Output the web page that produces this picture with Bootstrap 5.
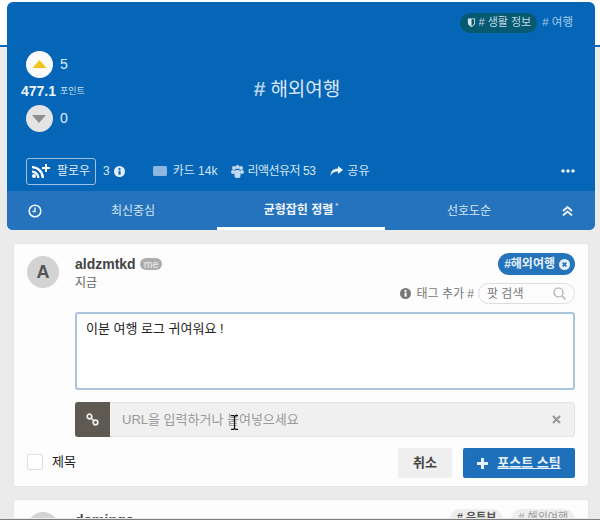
<!DOCTYPE html>
<html lang="ko">
<head>
    <meta charset="UTF-8">
    <title>해외여행</title>
    <link href="https://cdn.jsdelivr.net/npm/bootstrap@5.3.0/dist/css/bootstrap.min.css" rel="stylesheet">
    <style>
        html, body { height: 520px; overflow: hidden; }
        body {
            font-family: "Liberation Sans", "Noto Sans CJK KR", sans-serif;
            font-size: 12px;
            color: #333;
            background: linear-gradient(#fff 0 45px, #0b68b8 45px 47px, #ebebeb 47px);
        }
        .hero {
            margin: 2px 5px 0 7px;
            height: 228px;
            background: #0565b7;
            color: #d5e5f3;
            border-radius: 6px;
            overflow: hidden;
        }
        .hero-top { height: 189px; padding: 10px 20px 0 14px; }
        .cat-row { height: 21px; font-size: 11.5px; }
        .cat-main { background: #055a72; border-radius: 11px; padding: 0 6px 0 7px; height: 20px; margin-right: 5px; color: #c5d9e4; font-size: 11px; gap: 3px; }
        .cat-sub { color: #a5cdec; margin-right: 2px; }
        .vote-col { width: 68px; margin-top: 18px; }
        .vote-line { padding-left: 5px; height: 27px; font-size: 14px; color: #e1edf7; }
        .vote-btn { width: 27px; height: 27px; border-radius: 50%; background: #fafafa; margin-right: 7px; }
        .vote-btn.is-down { background: #e4e4e4; }
        .point-line { height: 27px; font-size: 14px; font-weight: 700; color: #eef4fa; white-space: nowrap; }
        .point-line small { font-size: 9px; font-weight: 400; margin-left: 4px; color: #cfe0f0; }
        .hero-title { font-size: 19px; padding: 40px 70px 0 0; color: #dbe8f4; }
        .hash { color: #b9d3ea; font-weight: 700; font-size: 21px; margin-right: 5px; }
        .stat-row { height: 26px; margin: 26px 0 0 5px; font-size: 12px; }
        .follow-btn { width: 70px; height: 27px; border: 1px solid #9cc3e6; border-radius: 3px; color: #e3eef8; margin-right: 7px; gap: 5px; }
        .card-ico { margin: 0 6px 0 28px; }
        .card-txt { margin-right: 14px; }
        .react-ico { margin-right: 3px; }
        .react-txt { margin-right: 15px; letter-spacing: -.5px; }
        .hero-tabs { height: 39px; background: #2673bd; font-size: 12px; color: #d5e5f3; }
        .hero-tabs > div { height: 39px; }
        .tab-clock { width: 42px; padding-left: 21px; }
        .tab-item { width: 168px; }
        .tab-item.is-on { border-bottom: 3px solid #fff; color: #f1f6fb; font-weight: 700; padding-top: 2px; }
        .tab-star { font-size: 8px; font-weight: 400; margin: -8px 0 0 2px; }
        .tab-end { flex: 1; padding-left: 9px; }
        .post-box {
            margin: 13px 11px 0 13px;
            height: 244px;
            background: #fdfdfe;
            border: 1px solid #e6e6e6;
            border-radius: 3px;
            padding: 9px 13px 0 13px;
            position: relative;
        }
        .ava { width: 32px; height: 32px; border-radius: 50%; background: #d3d3d3; color: #555; font-size: 18px; font-weight: 700; margin: 3px 16px 0 0; }
        .uname { font-size: 14px; font-weight: 700; color: #444; line-height: 18px; margin-top: 2px; }
        .me-tag { background: #adadad; color: #eee; font-size: 10.5px; border-radius: 7px; padding: 0 4px; line-height: 12px; margin-left: 4px; font-weight: 400; }
        .when { color: #666; font-size: 12px; margin-top: 1px; }
        .tag-pill { background: #2573bb; color: #e6f0f8; height: 22px; font-size: 12px; font-weight: 700; border-radius: 11px; padding: 0 5px 0 6px; gap: 4px; margin-bottom: 8px; }
        .tag-add { color: #777; font-size: 12px; gap: 4px; }
        .tag-add-ico { margin-right: 1px; }
        .tag-search { width: 97px; height: 21px; border: 1px solid #ddd; border-radius: 11px; padding: 0 8px; color: #777; }
        .memo {
            height: 78px;
            margin: 8px 0 0 48px;
            border: 2px solid #a9c5de;
            border-radius: 3px;
            background: #fff;
            padding: 5px 9px;
            font-size: 13px;
            color: #222;
        }
        .url-row { height: 35px; margin: 12px 0 0 48px; background: #f0f0f0; border: 1px solid #e3e3e3; border-radius: 3px; }
        .url-icon { width: 35px; height: 35px; margin: -1px 0 -1px -1px; background: #5e5a51; border-radius: 3px 0 0 3px; }
        .url-text { flex: 1; padding-left: 12px; color: #999; font-size: 13px; }
        .url-x { margin-right: 13px; }
        .cursor-i { position: absolute; left: 217px; top: 171px; }
        .foot-row { margin-top: 11px; height: 30px; }
        .chk { width: 16px; height: 16px; border: 1px solid #ddd; border-radius: 2px; background: #fff; margin: 0 9px 2px 0; }
        .title-lab { font-size: 13px; color: #222; margin-bottom: 2px; }
        .cancel-btn { width: 54px; height: 30px; background: #efefef; color: #444; font-size: 13px; font-weight: 700; border-radius: 2px; margin-right: 11px; }
        .stim-btn { width: 112px; height: 30px; background: #1f70bb; color: #e6f0f8; font-size: 13px; font-weight: 700; border-radius: 2px; gap: 9px; }
        .next-box {
            margin: 12px 11px 0 13px;
            height: 19px;
            background: #fdfdfe;
            border: 1px solid #e6e6e6;
            border-bottom: 0;
            border-radius: 3px 3px 0 0;
            padding: 9px 13px 0 13px;
            overflow: hidden;
        }
        .next-tag { background: #eee; color: #555; border-radius: 10px; padding: 0 7px; height: 20px; font-size: 11px; margin-left: 8px; white-space: nowrap; font-weight: 700; }
        .next-tag.is-dim { color: #999; font-weight: 400; }
        .page-edge { position: absolute; left: 0; right: 0; top: 519px; height: 1px; background: #7d7d7d; }
    </style>
</head>
<body>
    <div class="hero">
        <div class="hero-top">
            <div class="cat-row d-flex justify-content-end align-items-center">
                <span class="cat-main d-flex align-items-center">
                    <svg width="9" height="11" viewBox="0 0 10 11"><path d="M1 1h8v5c0 2-2 3.500-4 4.500C3 9.500 1 8 1 6z" fill="#dbe6ec"/><path d="M5 2v7.500c1.500-.8 3-2 3-3.500V2z" fill="#055a72"/></svg>
                    # 생활 정보
                </span>
                <span class="cat-sub"># 여행</span>
            </div>
            <div class="d-flex">
                <div class="vote-col">
                    <div class="vote-line d-flex align-items-center">
                        <span class="vote-btn d-flex align-items-center justify-content-center">
                            <svg width="15" height="9" viewBox="0 0 15 9"><path d="M7.500 0l7 8H.5z" fill="#f0c419"/></svg>
                        </span>5
                    </div>
                    <div class="point-line d-flex align-items-center">477.1<small>포인트</small></div>
                    <div class="vote-line d-flex align-items-center">
                        <span class="vote-btn is-down d-flex align-items-center justify-content-center">
                            <svg width="15" height="8" viewBox="0 0 15 8"><path d="M0 0h14L7 8z" fill="#8e8e8e"/></svg>
                        </span>0
                    </div>
                </div>
                <div class="hero-title flex-grow-1 text-center"><span class="hash">#</span>해외여행</div>
            </div>
            <div class="stat-row d-flex align-items-center">
                <span class="follow-btn d-flex align-items-center justify-content-center">
                    <svg width="20" height="14" viewBox="0 0 20 14" fill="#fff"><circle cx="2" cy="12" r="2"/><path d="M0 6.500a7.500 7.500 0 0 1 7.500 7.500H5.200A5.200 5.200 0 0 0 0 8.800z"/><path d="M0 2a12 12 0 0 1 12 12H9.700A9.700 9.700 0 0 0 0 4.300z"/><path d="M13 0h2v3h3v2h-3v3h-2V5h-3V3h3z"/></svg>
                    팔로우
                </span>
                <span class="me-1">3</span>
                <svg width="11" height="11" viewBox="0 0 12 12"><circle cx="6" cy="6" r="6" fill="#e3eef8"/><rect x="5" y="5" width="2.200" height="4.500" fill="#0565b7"/><circle cx="6" cy="3.200" r="1.200" fill="#0565b7"/></svg>
                <svg class="card-ico" width="14" height="10" viewBox="0 0 14 10"><rect width="14" height="10" rx="1.500" fill="#8fb6e0"/></svg>
                <span class="card-txt">카드 14k</span>
                <svg class="react-ico" width="13" height="13" viewBox="0 0 13 13" fill="#c5d9ee"><circle cx="3" cy="3" r="2"/><circle cx="6.500" cy="2" r="2"/><circle cx="10" cy="3" r="2"/><circle cx="2" cy="7" r="2"/><circle cx="11" cy="7" r="2"/><rect x="3.500" y="5" width="6" height="8" rx="2"/></svg>
                <span class="react-txt">리액션유저 53</span>
                <svg class="me-1" width="13" height="10" viewBox="0 0 13 10"><path d="M8 0l5 4-5 4V5.500C4.500 5.500 2 6.500.5 10 .5 5.500 3 2.500 8 2.500z" fill="#f0f5fa"/></svg>
                <span>공유</span>
                <svg class="ms-auto" width="14" height="4" viewBox="0 0 14 4" fill="#e3eef8"><circle cx="2" cy="2" r="1.800"/><circle cx="7" cy="2" r="1.800"/><circle cx="12" cy="2" r="1.800"/></svg>
            </div>
        </div>
        <div class="hero-tabs d-flex">
            <div class="tab-clock d-flex align-items-center">
                <svg width="14" height="14" viewBox="0 0 14 14" fill="none" stroke="#f0f5fa"><circle cx="7" cy="7" r="5.800" stroke-width="1.600"/><path d="M7 3.500V7.500H4.500" stroke-width="1.400"/></svg>
            </div>
            <div class="tab-item d-flex align-items-center justify-content-center">최신중심</div>
            <div class="tab-item is-on d-flex align-items-center justify-content-center">균형잡힌 정렬<span class="tab-star">*</span></div>
            <div class="tab-item d-flex align-items-center justify-content-center">선호도순</div>
            <div class="tab-end d-flex align-items-center">
                <svg width="11" height="10" viewBox="0 0 11 10" fill="none" stroke="#f0f5fa" stroke-width="1.800"><path d="M1 5l4.500-4L10 5"/><path d="M1 9.500l4.500-4 4.500 4"/></svg>
            </div>
        </div>
    </div>

    <div class="post-box">
        <div class="d-flex">
            <div class="ava d-flex align-items-center justify-content-center">A</div>
            <div>
                <div class="uname d-flex align-items-center">aldzmtkd<span class="me-tag">me</span></div>
                <div class="when">지금</div>
            </div>
            <div class="ms-auto d-flex flex-column align-items-end">
                <span class="tag-pill d-flex align-items-center">
                    #해외여행
                    <svg width="11" height="11" viewBox="0 0 12 12"><circle cx="6" cy="6" r="6" fill="#e6f0f8"/><path d="M4 4l4 4M8 4l-4 4" stroke="#2573bb" stroke-width="1.800"/></svg>
                </span>
                <div class="tag-add d-flex align-items-center">
                    <svg class="tag-add-ico" width="11" height="11" viewBox="0 0 12 12"><circle cx="6" cy="6" r="6" fill="#777"/><rect x="5" y="5" width="2.200" height="4.500" fill="#fff"/><circle cx="6" cy="3.200" r="1.200" fill="#fff"/></svg>
                    태그 추가 #
                    <span class="tag-search d-flex align-items-center justify-content-between">
                        팟 검색
                        <svg width="13" height="13" viewBox="0 0 13 13" fill="none" stroke="#aaa" stroke-width="1.200"><circle cx="5.500" cy="5.500" r="4.500"/><path d="M9 9l3.500 3.500"/></svg>
                    </span>
                </div>
            </div>
        </div>
        <div class="memo">이분 여행 로그 귀여워요 !</div>
        <div class="url-row d-flex align-items-center">
            <div class="url-icon d-flex align-items-center justify-content-center">
                <svg width="13" height="13" viewBox="0 0 13 13" fill="none" stroke="#eee" stroke-width="1.700"><circle cx="3.500" cy="3.500" r="2.300"/><circle cx="9.500" cy="9.500" r="2.300"/><path d="M5 5l3 3"/></svg>
            </div>
            <div class="url-text">URL을 입력하거나 붙여넣으세요</div>
            <svg class="url-x" width="9" height="9" viewBox="0 0 9 9"><path d="M1 1l7 7M8 1L1 8" stroke="#999" stroke-width="2.200"/></svg>
        </div>
        <svg class="cursor-i" width="7" height="15" viewBox="0 0 7 15" fill="none" stroke="#111" stroke-width="1.200"><path d="M0 .7h2.500L3.500 1.700 4.500.7H7M3.500 1.700v11.600M0 14.300h2.500l1-1 1 1H7"/></svg>
        <div class="foot-row d-flex align-items-center">
            <span class="chk"></span>
            <span class="title-lab">제목</span>
            <span class="cancel-btn ms-auto d-flex align-items-center justify-content-center">취소</span>
            <span class="stim-btn d-flex align-items-center justify-content-center">
                <svg width="11" height="11" viewBox="0 0 11 11"><path d="M4 0h3v4h4v3H7v4H4V7H0V4h4z" fill="#e6f0f8"/></svg>
                <span class="text-decoration-underline">포스트 스팀</span>
            </span>
        </div>
    </div>

    <div class="next-box d-flex">
        <div class="ava d-flex align-items-center justify-content-center"></div>
        <div class="uname">domingo</div>
        <div class="ms-auto d-flex">
            <span class="next-tag"># 유튜브</span>
            <span class="next-tag is-dim"># 해외여행</span>
        </div>
    </div>
    <div class="page-edge"></div>
</body>
</html>
